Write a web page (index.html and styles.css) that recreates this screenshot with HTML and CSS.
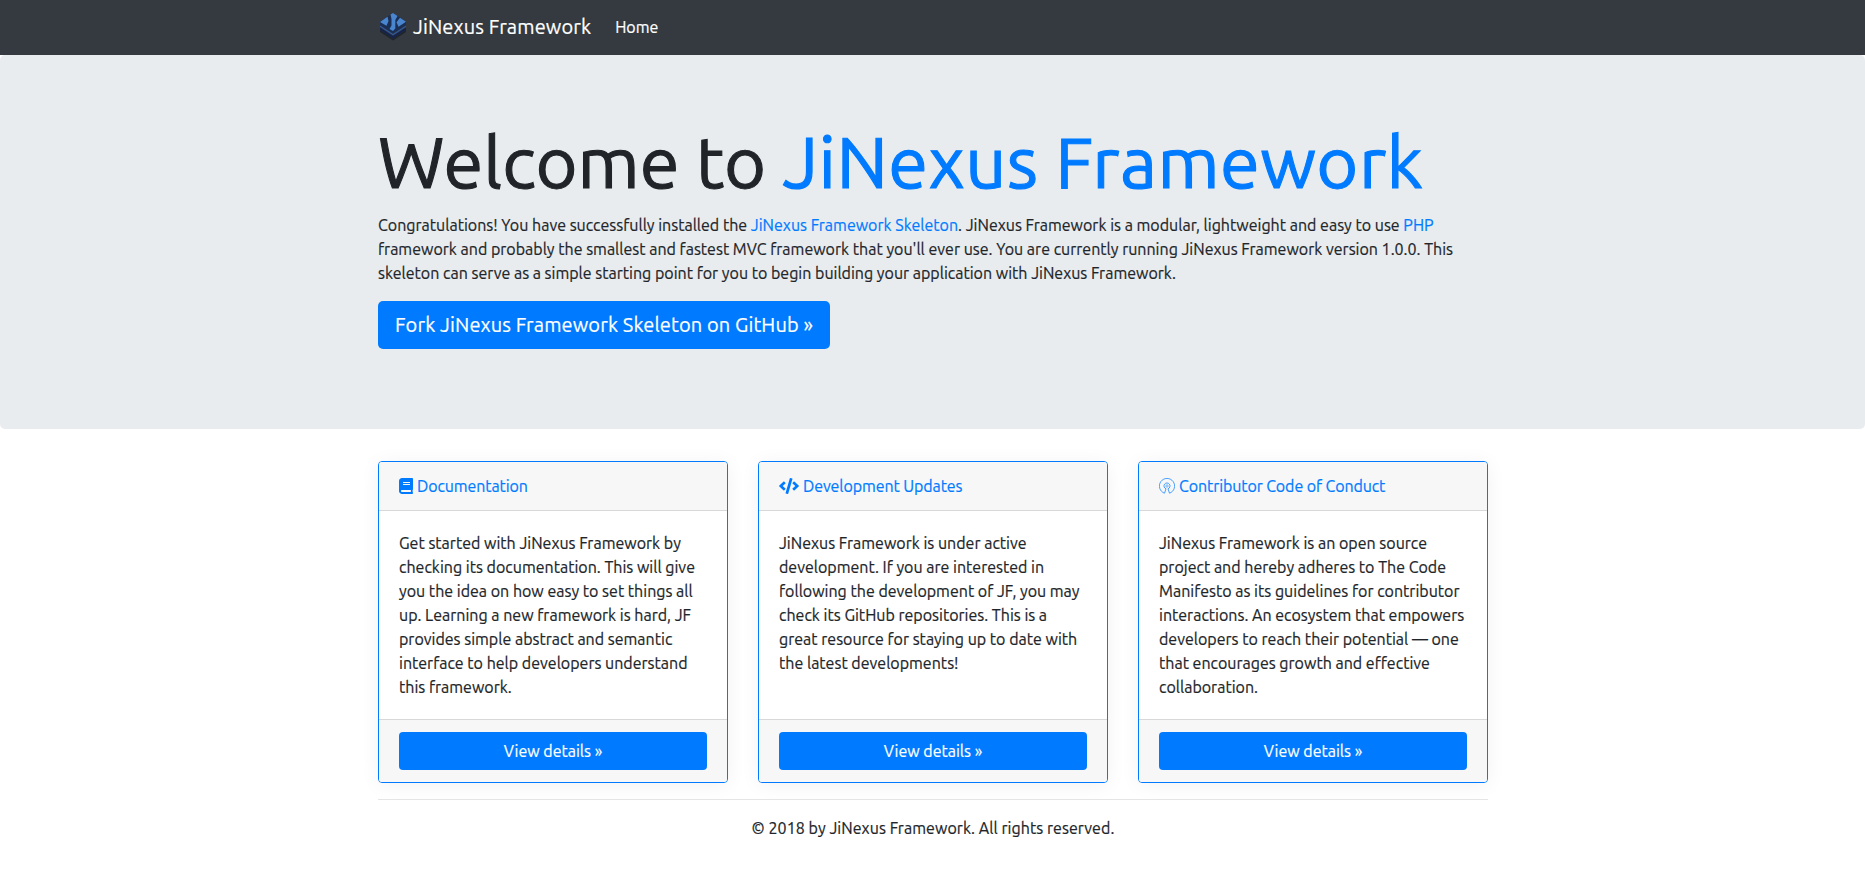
FILE: index.html
```html
<!DOCTYPE html>
<html lang="en">
<head>
<meta charset="utf-8">
<title>JiNexus Framework</title>
<link rel="stylesheet" href="styles.css">
</head>
<body>
<nav class="navbar">
  <div class="container navbar-row">
    <a class="brand" href="#">
      <svg class="logo" viewBox="0 0 30 30">
        <path d="M2 19 15 27.500 28 19v2L15 29.500 2 21z" fill="#20242b"/>
        <path d="M2 16.500 15 25 28 16.500v2.500L15 27.500 2 19z" fill="#15234b"/>
        <path d="M2 14.500 15 23 28 14.500v1.200L15 24.300 2 15.700z" fill="#2e5ca8"/>
        <path d="M2 10.500 15 2l13 8.500v3.500l-13 8.500L2 14z" fill="#1b2f55"/>
        <path d="M2 11 9.500 5.800 10.500 10 8.500 14.800z" fill="#4a86d0"/>
        <path d="M12.500 3.500 15 2l4.500 3-2.200 4v8.500l-2.300 2.500-3.500-2 2-3.500V8z" fill="#4a86d0"/>
        <path d="M22 6.800l6 4-7.500 5-2-4.500z" fill="#4a86d0"/>
      </svg>
      <span>JiNexus Framework</span>
    </a>
    <a class="nav-link" href="#">Home</a>
  </div>
</nav>
<header class="jumbotron">
  <div class="container">
    <h1 class="title">Welcome to <span class="accent">JiNexus Framework</span></h1>
    <p class="lead">Congratulations! You have successfully installed the <a href="#">JiNexus Framework Skeleton</a>. JiNexus Framework is a modular, lightweight and easy to use <a href="#">PHP</a><br>framework and probably the smallest and fastest MVC framework that you'll ever use. You are currently running JiNexus Framework version 1.0.0. This<br>skeleton can serve as a simple starting point for you to begin building your application with JiNexus Framework.</p>
    <a class="btn btn-lg" href="#">Fork JiNexus Framework Skeleton on GitHub »</a>
  </div>
</header>
<main class="container">
  <div class="cards">
    <section class="card">
      <div class="card-header"><svg class="icon book" viewBox="0 0 448 512"><path d="M448 360V24c0-13.300-10.700-24-24-24H96C43 0 0 43 0 96v320c0 53 43 96 96 96h328c13.300 0 24-10.700 24-24v-16c0-7.500-3.500-14.300-8.900-18.700-4.200-15.400-4.200-59.300 0-74.700 5.400-4.300 8.900-11.100 8.900-18.600zM128 134c0-3.300 2.700-6 6-6h212c3.300 0 6 2.700 6 6v20c0 3.300-2.700 6-6 6H134c-3.300 0-6-2.700-6-6v-20zm0 64c0-3.300 2.700-6 6-6h212c3.300 0 6 2.700 6 6v20c0 3.300-2.700 6-6 6H134c-3.300 0-6-2.700-6-6v-20zm253.400 250H96c-17.700 0-32-14.300-32-32 0-17.600 14.400-32 32-32h285.400c-1.900 17.100-1.900 46.900 0 64z"/></svg><a href="#">Documentation</a></div>
      <div class="card-body">Get started with JiNexus Framework by<br>checking its documentation. This will give<br>you the idea on how easy to set things all<br>up. Learning a new framework is hard, JF<br>provides simple abstract and semantic<br>interface to help developers understand<br>this framework.</div>
      <div class="card-footer"><a class="btn btn-block" href="#">View details »</a></div>
    </section>
    <section class="card">
      <div class="card-header"><svg class="icon code" viewBox="0 0 640 512"><path d="M278.900 511.500l-61-17.700c-6.400-1.800-10-8.500-8.200-14.900L346.200 8.700c1.800-6.400 8.500-10 14.900-8.200l61 17.700c6.400 1.800 10 8.500 8.200 14.900L293.800 503.300c-1.900 6.400-8.500 10.100-14.900 8.200zm-114-112.200l43.500-46.400c4.600-4.900 4.300-12.700-.8-17.200L117 256l90.600-79.700c5.100-4.500 5.500-12.300.8-17.200l-43.500-46.400c-4.500-4.800-12.100-5.100-17-.5L3.800 247.200c-5.100 4.700-5.100 12.800 0 17.500l144.100 135.100c4.900 4.600 12.500 4.400 17-.5zm327.200.6l144.100-135.100c5.100-4.700 5.100-12.800 0-17.500L492.100 112.100c-4.800-4.500-12.400-4.300-17 .5L431.600 159c-4.600 4.900-4.300 12.700.8 17.200L523 256l-90.600 79.700c-5.100 4.500-5.500 12.300-.8 17.200l43.500 46.400c4.500 4.900 12.100 5.100 17 .6z"/></svg><a href="#">Development Updates</a></div>
      <div class="card-body">JiNexus Framework is under active<br>development. If you are interested in<br>following the development of JF, you may<br>check its GitHub repositories. This is a<br>great resource for staying up to date with<br>the latest developments!</div>
      <div class="card-footer"><a class="btn btn-block" href="#">View details »</a></div>
    </section>
    <section class="card">
      <div class="card-header"><svg class="icon osi" viewBox="0 0 16 16"><path d="M5.500 15.200 7 10.800A3 3 0 1 1 9 10.800L10.500 15.200A7.600 7.600 0 1 0 5.500 15.200z" fill="none" stroke="#007bff" stroke-width=".7" stroke-linejoin="round"/><circle cx="8" cy="8" r="1.200" fill="none" stroke="#007bff" stroke-width=".5"/></svg><a href="#">Contributor Code of Conduct</a></div>
      <div class="card-body">JiNexus Framework is an open source<br>project and hereby adheres to The Code<br>Manifesto as its guidelines for contributor<br>interactions. An ecosystem that empowers<br>developers to reach their potential — one<br>that encourages growth and effective<br>collaboration.</div>
      <div class="card-footer"><a class="btn btn-block" href="#">View details »</a></div>
    </section>
  </div>
  <footer class="footer">© 2018 by JiNexus Framework. All rights reserved.</footer>
</main>
</body>
</html>
```
FILE: styles.css
```css
*, *::before, *::after { box-sizing: border-box; }
body {
  margin: 0;
  background: #fff;
  color: #212529;
  font-family: Ubuntu, "Noto Sans", sans-serif;
  font-size: 16px;
  line-height: 24px;
  white-space: nowrap;
  -webkit-text-stroke-width: .2px;
}
a { color: #007bff; text-decoration: none; }
.container { width: 1110px; margin: 0 auto 0 378px; }
.navbar { height: 55px; background: #343a40; }
.navbar-row { display: flex; align-items: center; height: 54px; }
.brand { display: flex; align-items: center; margin-right: 24px; color: #fff; font-size: 20px; letter-spacing: .13px; }
.logo { width: 30px; height: 30px; margin: -2px 5px 0 0; }
.nav-link { color: #fff; }
.jumbotron { height: 374px; padding-top: 64px; background: #e9ecef; border-radius: 5px; }
.title { margin: 0 0 8px; font-size: 72px; font-weight: 400; line-height: 86px; -webkit-text-stroke-width: 1.1px; }
.accent { color: #007bff; letter-spacing: .42px; }
.lead { margin: 0 0 16px; }
.btn {
  display: inline-block;
  height: 38px;
  padding: 7px 12px;
  border-radius: 4px;
  background: #007bff;
  color: #fff;
  text-align: center;
}
.btn-lg { width: 452px; height: 48px; padding: 9px 0; border-radius: 5px; font-size: 20px; line-height: 30px; letter-spacing: .12px; }
.btn-block { display: block; }
.cards { display: grid; grid-template-columns: repeat(3, 350px); gap: 30px; margin-top: 32px; }
.card {
  display: flex;
  flex-direction: column;
  border: 1px solid #007bff;
  border-radius: 4px;
  background: #fff;
  box-shadow: 0 2px 20px rgba(0, 0, 0, .055);
}
.card-header { display: flex; align-items: center; height: 49px; padding: 0 20px; background: #f7f7f7; border-bottom: 1px solid #d8d8d8; border-radius: 3px 3px 0 0; letter-spacing: -.1px; }
.card-body { flex: 1; padding: 20px; }
.card-footer { padding: 12px 20px; background: #f7f7f7; border-top: 1px solid #d8d8d8; border-radius: 0 0 3px 3px; }
.icon { height: 16px; margin-right: 4px; fill: #007bff; }
.book { width: 14px; }
.code { width: 20px; }
.osi { width: 16px; }
.footer { margin-top: 16px; padding-top: 16px; border-top: 1px solid #e5e5e5; text-align: center; letter-spacing: .05px; }
```
